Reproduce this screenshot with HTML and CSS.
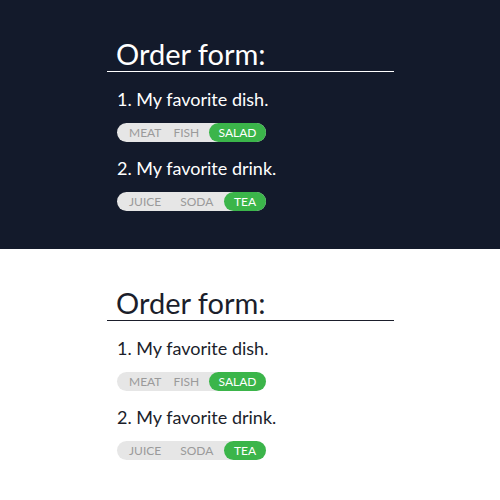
FILE: index.html
```html
<!DOCTYPE html>
<html>
<head>
  <link rel="stylesheet" href="styles.css">
</head>
<body>
  <!-- dark version -->
  <div class="panel panel-dark">
    <div class="form">
      <div class="title">Order form:</div>
      <div class="question">1. My favorite dish.</div>
      <div class="toggle toggle-dish">
        <span class="option">MEAT</span>
        <span class="option">FISH</span>
        <span class="option option-on">SALAD</span>
      </div>
      <div class="question">2. My favorite drink.</div>
      <div class="toggle toggle-drink">
        <span class="option">JUICE</span>
        <span class="option">SODA</span>
        <span class="option option-on">TEA</span>
      </div>
    </div>
  </div>
  <!-- light version -->
  <div class="panel panel-light">
    <div class="form">
      <div class="title">Order form:</div>
      <div class="question">1. My favorite dish.</div>
      <div class="toggle toggle-dish">
        <span class="option">MEAT</span>
        <span class="option">FISH</span>
        <span class="option option-on">SALAD</span>
      </div>
      <div class="question">2. My favorite drink.</div>
      <div class="toggle toggle-drink">
        <span class="option">JUICE</span>
        <span class="option">SODA</span>
        <span class="option option-on">TEA</span>
      </div>
    </div>
  </div>
</body>
</html>
```

FILE: styles.css
```css
* {
  margin: 0;
  padding: 0;
  box-sizing: border-box;
}

body {
  width: 500px;
  height: 500px;
  font-family: Lato, "Open Sans", sans-serif;
  background-color: white;
}

.panel {
  height: 249px;
  padding-top: 36px;
}

.panel-dark {
  background-color: #131a2b;
  color: white;
}

.panel-light {
  height: 251px;
  background-color: white;
  color: #1b1e2b;
}

.form {
  width: 287px;
  margin-left: 107px;
}

.title {
  font-size: 29px;
  line-height: 35px;
  padding-left: 9px;
  border-bottom: 1.5px solid currentColor;
}

.question {
  font-size: 18px;
  line-height: 22px;
  padding-left: 10px;
  margin-top: 16px;
}

.toggle + .question {
  margin-top: 15px;
}

.toggle {
  display: flex;
  width: 149px;
  height: 19px;
  margin-left: 10px;
  margin-top: 13px;
  background-color: #e6e6e6;
  border-radius: 10px;
}

.option {
  font-size: 12px;
  line-height: 19px;
  color: #9a9a9a;
  padding: 0 6px;
}

.option:first-child {
  padding-left: 12px;
}

.toggle-drink .option:nth-child(2) {
  padding-left: 13px;
}

.option-on {
  margin-left: auto;
  background-color: #3bb54a;
  color: white;
  border-radius: 10px;
  padding: 0;
  text-align: center;
}

.toggle-dish .option-on {
  width: 57px;
}

.toggle-drink .option-on {
  width: 42px;
}
```
